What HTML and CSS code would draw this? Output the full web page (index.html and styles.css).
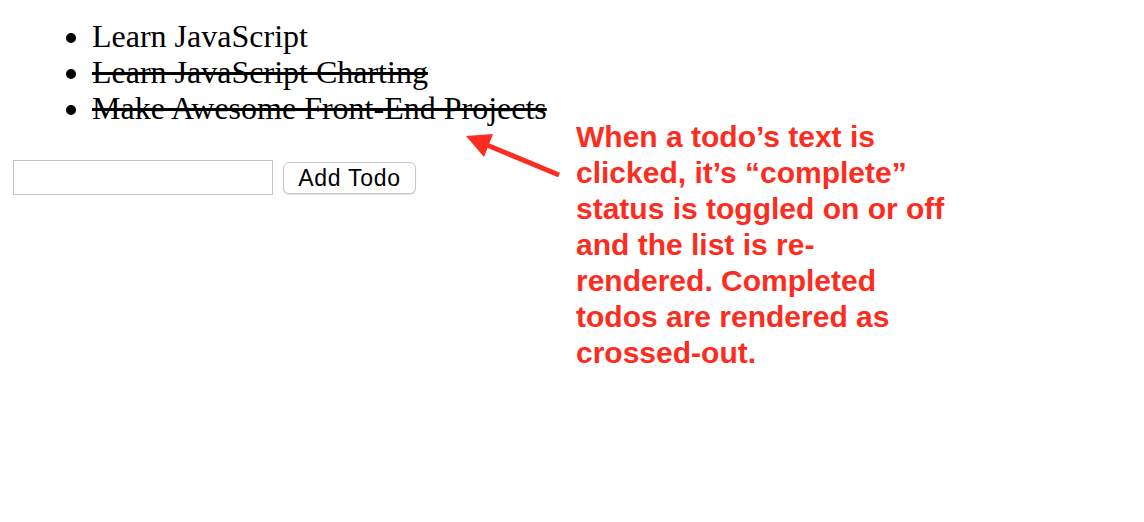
FILE: index.html
```html
<!DOCTYPE html>
<html>
<head>
<meta charset="utf-8">
<link rel="stylesheet" href="styles.css">
</head>
<body>
<div class="app">
  <ul class="todos">
    <li>Learn JavaScript</li>
    <li class="done">Learn JavaScript Charting</li>
    <li class="done">Make Awesome Front-End Projects</li>
  </ul>
  <form class="add-form">
    <input class="todo-input" type="text">
    <button class="add-btn" type="button">Add Todo</button>
  </form>
</div>
<svg class="arrow" width="1144" height="522" viewBox="0 0 1144 522">
  <line x1="559" y1="175" x2="482" y2="143" stroke="#fc2d20" stroke-width="5"/>
  <polygon points="466,136 493,134 484,157" fill="#fc2d20"/>
</svg>
<p class="note">When a todo’s text is clicked, it’s “complete” status is toggled on or off and the list is re-rendered. Completed todos are rendered as crossed-out.</p>
</body>
</html>
```
FILE: styles.css
```css
html, body {
  margin: 0;
  padding: 0;
  background: #fff;
}
body {
  width: 1144px;
  height: 522px;
  position: relative;
  overflow: hidden;
}
.app {
  padding: 18px 0 0 13px;
}
.todos {
  margin: 0;
  padding-left: 79px;
  font-family: "Liberation Serif", "Times New Roman", serif;
  font-size: 32px;
  line-height: 36px;
  color: #000;
}
.todos .done {
  text-decoration: line-through;
}
.add-form {
  margin: 34px 0 0;
  display: flex;
  align-items: center;
  gap: 10px;
}
.todo-input {
  box-sizing: border-box;
  width: 260px;
  height: 35px;
  margin: 0;
  border: 1px solid #c4c4c4;
  padding: 0 4px;
  font-size: 20px;
}
.add-btn {
  box-sizing: border-box;
  width: 133px;
  height: 32px;
  margin: 1px 0 0;
  padding: 0;
  background: #fff;
  border: 1px solid #c8c8c8;
  border-radius: 6px;
  box-shadow: 0 1px 1px rgba(0,0,0,0.12);
  font-family: "Liberation Sans", Arial, sans-serif;
  font-size: 23px;
  letter-spacing: 0.7px;
  color: #000;
}
.arrow {
  position: absolute;
  left: 0;
  top: 0;
}
.note {
  position: absolute;
  left: 576px;
  top: 119px;
  width: 370px;
  margin: 0;
  font-family: "Liberation Sans", Arial, sans-serif;
  font-weight: bold;
  font-size: 30px;
  line-height: 36px;
  color: #fc2d20;
}
```
